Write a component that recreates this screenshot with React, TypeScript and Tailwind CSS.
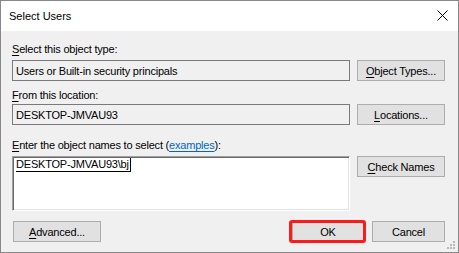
import type { ReactNode } from 'react';

// mnemonic letter (Alt+key underline)
function Mn({ c }: { c: string }) {
  return <span className="underline underline-offset-[2px]">{c}</span>;
}

function Btn({ children, className = '' }: { children: ReactNode; className?: string }) {
  return (
    <button
      type="button"
      className={`flex h-[21px] items-center justify-center border border-[#adadad] bg-[#e1e1e1] text-black ${className}`}
    >
      {children}
    </button>
  );
}

function ReadOnlyBox({ value }: { value: string }) {
  return (
    <div className="flex h-[21px] flex-1 items-center border border-[#7a7a7a] bg-[#f0f0f0] pl-[3px] text-black">
      {value}
    </div>
  );
}

export default function App() {
  return (
    <div className="relative flex h-[253px] w-[459px] flex-col overflow-hidden border border-[#888888] bg-[#f0f0f0] font-['Liberation_Sans',Arial,sans-serif] text-[11px] leading-[14px] tracking-[-0.2px] text-black">
      {/* title bar */}
      <div className="flex h-[30px] items-center justify-between bg-white pl-[8px] pr-[10px]">
        <span className="tracking-normal">Select Users</span>
        <svg width="11" height="11" viewBox="0 0 11 11" className="-mt-[1px]">
          <path d="M0.5 0.5 L10.5 10.5 M10.5 0.5 L0.5 10.5" stroke="#000" strokeWidth="1" fill="none" />
        </svg>
      </div>

      <div className="flex flex-1 flex-col pl-[11px] pr-[13px] pt-[11px]">
        <p>
          <Mn c="S" />elect this object type:
        </p>
        <div className="mt-[4px] flex gap-[7px]">
          <ReadOnlyBox value="Users or Built-in security principals" />
          <Btn className="w-[88px]">
            <Mn c="O" />bject Types...
          </Btn>
        </div>

        <p className="mt-[7px]">
          <Mn c="F" />rom this location:
        </p>
        <div className="mt-[2px] flex gap-[7px]">
          <ReadOnlyBox value="DESKTOP-JMVAU93" />
          <Btn className="w-[88px]">
            <Mn c="L" />ocations...
          </Btn>
        </div>

        <p className="mt-[13px]">
          <Mn c="E" />nter the object names to select (
          <span className="text-[#0066cc] underline underline-offset-[2px]">examples</span>):
        </p>
        <div className="mt-[4px] flex items-start gap-[7px]">
          <div className="h-[55px] flex-1 border border-b-white border-l-[#a0a0a0] border-r-white border-t-[#a0a0a0] bg-white pl-[3px] shadow-[inset_1px_1px_0_#696969,inset_-1px_-1px_0_#e3e3e3]">
            <span className="inline-flex items-center border-b border-black leading-[13px]">
              DESKTOP-JMVAU93\bj
              <span className="ml-[1px] inline-block h-[13px] w-px bg-black" />
            </span>
          </div>
          <Btn className="w-[88px]">
            <Mn c="C" />heck Names
          </Btn>
        </div>

        <div className="mt-[10px] flex items-center">
          <Btn className="ml-[1px] w-[88px]">
            <Mn c="A" />dvanced...
          </Btn>
          <div className="relative ml-auto">
            <Btn className="w-[72px] border-[#0078d7]">OK</Btn>
            <div className="pointer-events-none absolute -bottom-[1px] -left-[3px] -right-[2px] -top-[1px] rounded-[3px] border-[3px] border-[#ff1a1a]" />
          </div>
          <Btn className="ml-[8px] w-[73px]">Cancel</Btn>
        </div>
      </div>

      {/* size grip */}
      <svg width="9" height="9" viewBox="0 0 9 9" className="absolute bottom-[2px] right-[2px]">
        <rect x="6" y="0" width="2" height="2" fill="#b9b9b9" />
        <rect x="3" y="3" width="2" height="2" fill="#b9b9b9" />
        <rect x="6" y="3" width="2" height="2" fill="#b9b9b9" />
        <rect x="0" y="6" width="2" height="2" fill="#b9b9b9" />
        <rect x="3" y="6" width="2" height="2" fill="#b9b9b9" />
        <rect x="6" y="6" width="2" height="2" fill="#b9b9b9" />
      </svg>
    </div>
  );
}
